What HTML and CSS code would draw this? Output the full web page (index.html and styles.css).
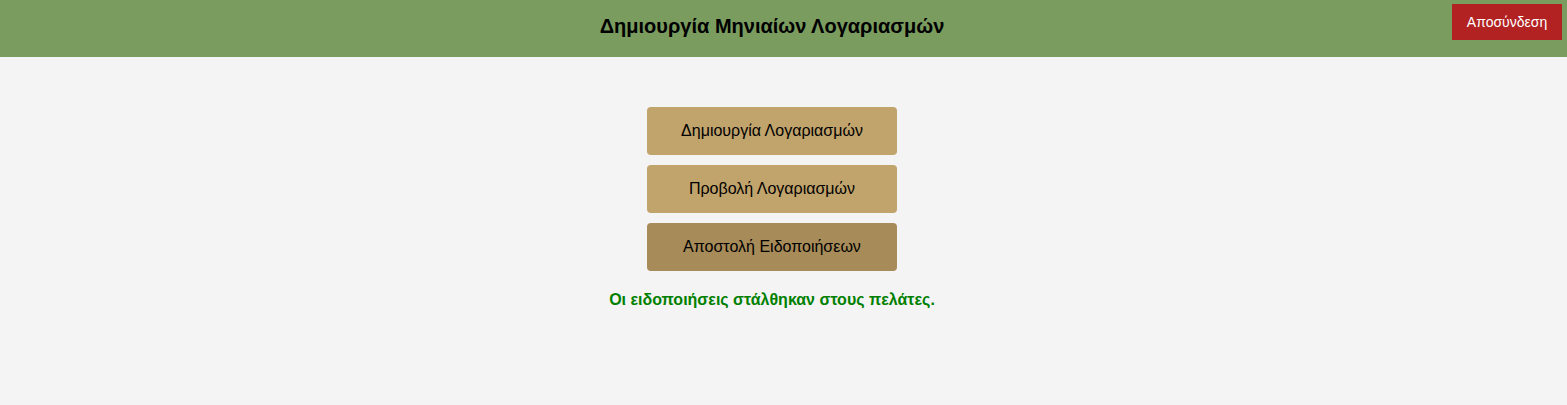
FILE: index.html
```html
<!DOCTYPE html>
<html lang="el">
<head>
<meta charset="utf-8">
<title>Δημιουργία Μηνιαίων Λογαριασμών</title>
<link rel="stylesheet" href="styles.css">
</head>
<body>
<header class="topbar">
  <h1 class="title">Δημιουργία Μηνιαίων Λογαριασμών</h1>
  <button class="logout">Αποσύνδεση</button>
</header>
<main class="content">
  <div class="actions">
    <button class="action">Δημιουργία Λογαριασμών</button>
    <button class="action">Προβολή Λογαριασμών</button>
    <button class="action active">Αποστολή Ειδοποιήσεων</button>
  </div>
  <p class="message">Οι ειδοποιήσεις στάλθηκαν στους πελάτες.</p>
</main>
</body>
</html>
```
FILE: styles.css
```css
html, body {
  margin: 0;
  padding: 0;
}
body {
  background: #f4f4f4;
  font-family: "Liberation Sans", Arial, sans-serif;
  color: #000;
  height: 405px;
}
.topbar {
  position: relative;
  background: #7a9c5f;
  height: 57px;
  display: flex;
  align-items: center;
  justify-content: center;
  padding-right: 23px;
}
.title {
  margin: 0 0 4px;
  font-size: 20px;
  font-weight: bold;
}
.logout {
  position: absolute;
  top: 4px;
  right: 5px;
  width: 110px;
  height: 36px;
  background: #b22222;
  color: #fff;
  border: none;
  font-family: "Liberation Sans", Arial, sans-serif;
  font-size: 14px;
  padding: 0;
}
.content {
  display: flex;
  flex-direction: column;
  align-items: center;
  padding-top: 50px;
  padding-right: 23px;
}
.actions {
  display: flex;
  flex-direction: column;
  gap: 10px;
}
.action {
  width: 250px;
  height: 48px;
  background: #c1a36c;
  border: none;
  border-radius: 4px;
  font-family: "Liberation Sans", Arial, sans-serif;
  font-size: 16px;
  color: #000;
  padding: 0;
}
.action.active {
  background: #a78b58;
}
.message {
  margin: 20px 0 0;
  color: #008000;
  font-weight: bold;
  font-size: 16px;
}
```
